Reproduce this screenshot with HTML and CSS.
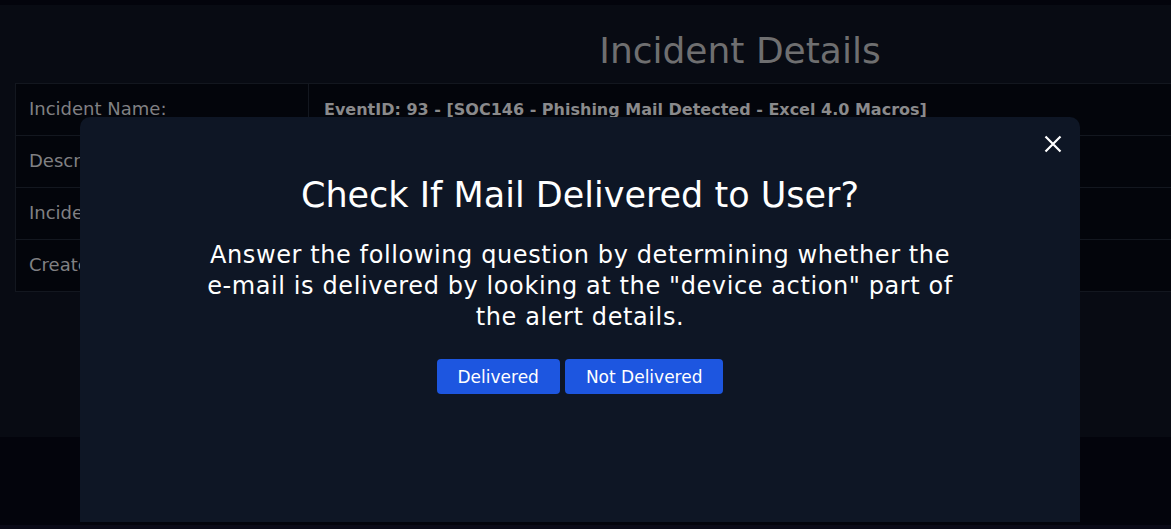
FILE: index.html
```html
<!DOCTYPE html>
<html lang="en">
<head>
<meta charset="utf-8">
<title>Incident Details</title>
<link rel="stylesheet" href="styles.css">
</head>
<body>
<div class="page">
  <div class="panel">
    <div class="panel-head">
      <div class="head-spacer"></div>
      <h1 class="panel-title">Incident Details</h1>
    </div>
    <div class="details">
      <div class="row">
        <div class="cell label">Incident Name:</div>
        <div class="cell value">EventID: 93 - [SOC146 - Phishing Mail Detected - Excel 4.0 Macros]</div>
      </div>
      <div class="row">
        <div class="cell label">Description:</div>
        <div class="cell value">Phishing Mail Detected</div>
      </div>
      <div class="row">
        <div class="cell label">Incident Type:</div>
        <div class="cell value">Exchange</div>
      </div>
      <div class="row">
        <div class="cell label">Created:</div>
        <div class="cell value">Jun, 13, 2021</div>
      </div>
    </div>
  </div>
  <div class="page-fill"></div>
  <div class="page-foot"></div>
</div>

<div class="modal">
  <button class="modal-close" aria-label="Close">
    <svg width="18" height="18" viewBox="0 0 18 18"><path d="M1.5 1.5 L16.5 16.5 M16.5 1.5 L1.5 16.5" stroke="#ffffff" stroke-width="2.2" stroke-linecap="butt" fill="none"/></svg>
  </button>
  <div class="modal-body">
    <h2 class="modal-title">Check If Mail Delivered to User?</h2>
    <p class="modal-text">Answer the following question by determining whether the<br>e-mail is delivered by looking at the "device action" part of<br>the alert details.</p>
    <div class="modal-actions">
      <button class="btn btn-delivered">Delivered</button>
      <button class="btn btn-not">Not Delivered</button>
    </div>
  </div>
</div>
</body>
</html>
```

FILE: styles.css
```css
* { box-sizing: border-box; }
html, body { margin: 0; padding: 0; }
body {
  background: #03040c;
  font-family: "DejaVu Sans", "Open Sans", sans-serif;
  width: 1171px;
  height: 529px;
  overflow: hidden;
}
.page {
  display: flex;
  flex-direction: column;
  height: 529px;
  padding-top: 5px;
  background: #03040c;
  border-top: 0;
}
.page::before {
  content: none;
}
.panel {
  background: #080b13;
  height: 432px;
  padding-left: 15px;
  flex-shrink: 0;
}
.page-fill {
  flex: 1;
}
.page-foot {
  height: 4px;
  background: #0a0a17;
}
.panel-head {
  display: grid;
  grid-template-columns: 294px 1fr;
  height: 78px;
  align-items: center;
  padding-top: 14px;
}
.panel-title {
  margin: 0;
  text-align: center;
  font-weight: normal;
  font-size: 36px;
  line-height: 44px;
  color: #6f6f70;
}
.details {
  border-top: 1px solid #13171f;
  border-left: 1px solid #13171f;
}
.row {
  display: grid;
  grid-template-columns: 293px 1fr;
  height: 52px;
  border-bottom: 1px solid #13171f;
  background: #03050b;
}
.cell {
  display: flex;
  align-items: center;
  color: #8a8a8c;
}
.label {
  padding-left: 13px;
  padding-bottom: 2px;
  border-right: 1px solid #13171f;
  font-size: 18px;
  color: #808083;
}
.value {
  padding-left: 15px;
  font-weight: bold;
  font-size: 16px;
}

.modal {
  position: absolute;
  left: 80px;
  top: 117px;
  width: 1000px;
  height: 405px;
  background: #0e1625;
  border-radius: 10px 10px 0 0;
}
.modal-close {
  position: absolute;
  right: 18px;
  top: 18px;
  width: 18px;
  height: 18px;
  padding: 0;
  border: 0;
  background: transparent;
  display: flex;
}
.modal-body {
  display: flex;
  flex-direction: column;
  align-items: center;
  padding-top: 56px;
}
.modal-title {
  margin: 0;
  font-weight: normal;
  font-size: 35px;
  line-height: 44px;
  color: #ffffff;
}
.modal-text {
  margin: 23px 0 0 0;
  text-align: center;
  font-size: 24px;
  letter-spacing: 0.6px;
  line-height: 31px;
  color: #ffffff;
}
.modal-actions {
  display: flex;
  gap: 5px;
  margin-top: 26px;
}
.btn {
  height: 35px;
  border: 0;
  border-radius: 4px;
  background: #1d56e0;
  color: #ffffff;
  font-family: "DejaVu Sans", sans-serif;
  font-size: 17px;
  padding: 0 21px;
}
```
